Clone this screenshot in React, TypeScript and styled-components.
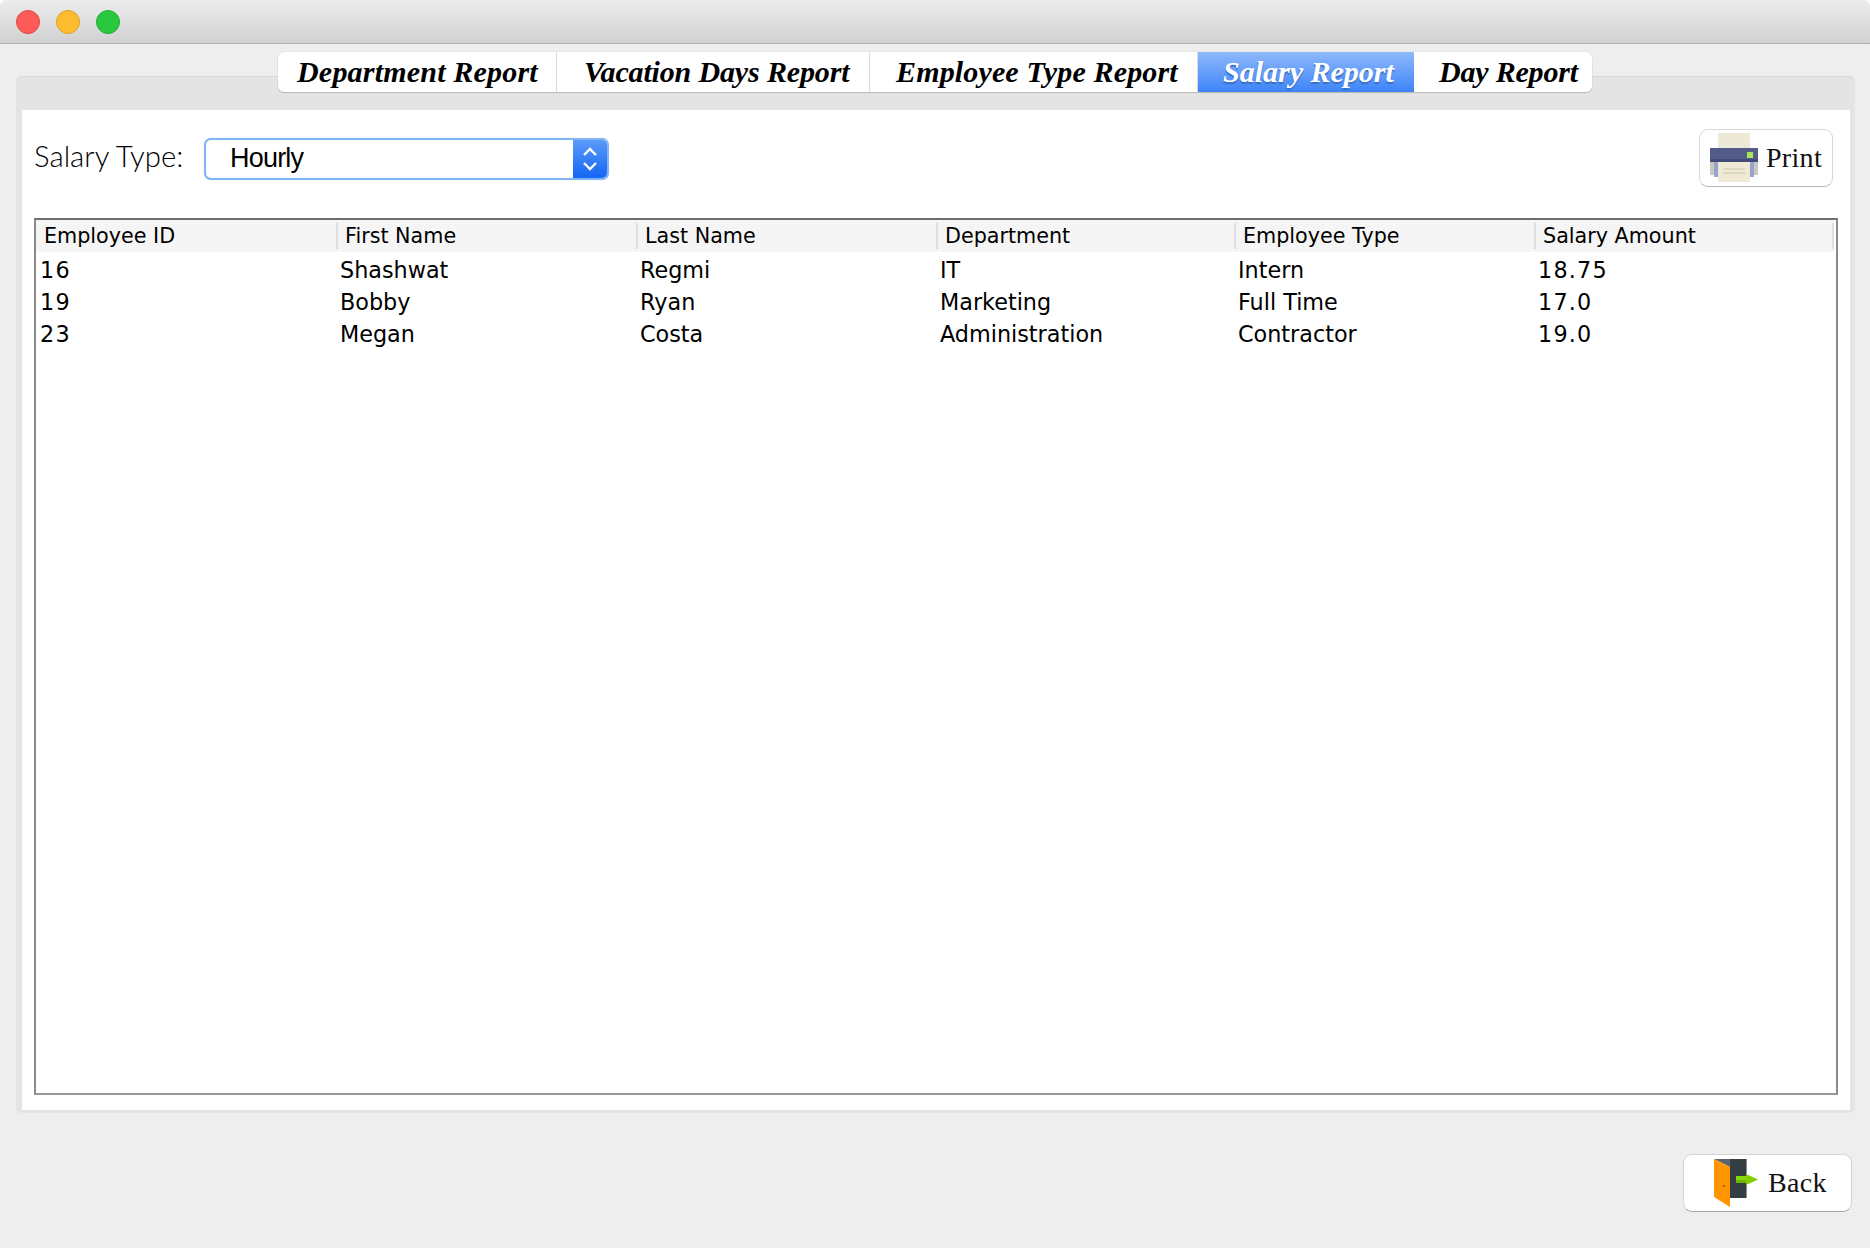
import React from "react";
import styled, { createGlobalStyle } from "styled-components";

const GlobalStyle = createGlobalStyle`
  html, body {
    margin: 0;
    padding: 0;
    background: #ffffff;
  }
`;

const columns = [
  "Employee ID",
  "First Name",
  "Last Name",
  "Department",
  "Employee Type",
  "Salary Amount",
];

const rows = [
  ["16", "Shashwat", "Regmi", "IT", "Intern", "18.75"],
  ["19", "Bobby", "Ryan", "Marketing", "Full Time", "17.0"],
  ["23", "Megan", "Costa", "Administration", "Contractor", "19.0"],
];

const tabs = [
  { label: "Department Report", width: 279, pad: 19, track: 0.2 },
  { label: "Vacation Days Report", width: 313, pad: 27, track: -0.15 },
  { label: "Employee Type Report", width: 328, pad: 26, track: 0.15 },
  { label: "Salary Report", width: 216, pad: 25, track: 0, active: true },
  { label: "Day Report", width: 178, pad: 25, track: -0.2 },
];

function PrinterIcon() {
  return (
    <svg width="50" height="50" viewBox="0 0 50 50">
      <rect x="9" y="0" width="32" height="15" fill="#ece9d8" />
      <rect x="1" y="29" width="48" height="13" fill="#c6c9c2" />
      <rect x="5" y="29" width="40" height="15" fill="#98a4c9" />
      <rect x="1" y="15" width="48" height="14" fill="#535c88" />
      <rect x="1" y="26" width="48" height="3" fill="#434c78" />
      <rect x="9" y="29" width="32" height="20" fill="#eeead6" />
      <rect x="14" y="35" width="22" height="2" fill="#dcd8c0" />
      <rect x="14" y="39" width="22" height="2" fill="#dcd8c0" />
      <rect x="38" y="19" width="6" height="6" fill="#a4e85a" />
    </svg>
  );
}

function DoorIcon() {
  return (
    <svg width="46" height="48" viewBox="0 0 46 48">
      <rect x="17" y="0" width="16" height="39" fill="#343c44" />
      <rect x="33" y="0" width="1" height="39" fill="#8a9096" />
      <polygon points="1,0 17,0 17,8" fill="#5b646c" />
      <polygon points="1,0 17,8 17,48 1,38" fill="#ff9500" />
      <circle cx="11" cy="27" r="1" fill="#8a5a10" />
      <rect x="23" y="17" width="11" height="4" fill="#8bd800" />
      <rect x="23" y="21" width="11" height="3" fill="#6fb500" />
      <polygon points="33,15 45,20.5 33,26" fill="#82cc00" />
    </svg>
  );
}

export default function App() {
  return (
    <Window>
      <GlobalStyle />
      <TitleBar>
        <Light color="#fc5b57" edge="#e2463f" />
        <Light color="#fdbc2e" edge="#e0a028" />
        <Light color="#28c83f" edge="#20ad32" />
      </TitleBar>
      <TabRow>
        <TabBar>
          {tabs.map((tab) => (
            <Tab
              key={tab.label}
              $active={tab.active}
              $width={tab.width}
              $pad={tab.pad}
              $track={tab.track}
            >
              {tab.label}
            </Tab>
          ))}
        </TabBar>
      </TabRow>
      <Panel>
        <Content>
          <Toolbar>
            <FilterGroup>
              <FilterLabel>Salary Type:</FilterLabel>
              <Combo>
                <ComboValue>Hourly</ComboValue>
                <ComboArrows>
                  <svg width="18" height="32" viewBox="0 0 18 32">
                    <path
                      d="M3 12 L9 6 L15 12 M3 20 L9 26 L15 20"
                      fill="none"
                      stroke="#fff"
                      strokeWidth="2.4"
                    />
                  </svg>
                </ComboArrows>
              </Combo>
            </FilterGroup>
            <PrintButton>
              <PrinterIcon />
              <ButtonText>Print</ButtonText>
            </PrintButton>
          </Toolbar>
          <Table>
            <HeaderRow>
              {columns.map((col) => (
                <HeaderCell key={col}>{col}</HeaderCell>
              ))}
            </HeaderRow>
            {rows.map((row) => (
              <DataRow key={row[0]}>
                {row.map((value, i) => (
                  <DataCell key={i} $numeric={i === 0 || i === 5}>
                    {value}
                  </DataCell>
                ))}
              </DataRow>
            ))}
          </Table>
        </Content>
      </Panel>
      <Footer>
        <BackButton>
          <DoorIcon />
          <ButtonText>Back</ButtonText>
        </BackButton>
      </Footer>
    </Window>
  );
}

const Window = styled.div`
  width: 1870px;
  height: 1248px;
  background: #eeeeee;
  border-radius: 7px 7px 0 0;
  overflow: hidden;
  display: flex;
  flex-direction: column;
`;

const TitleBar = styled.div`
  height: 44px;
  box-sizing: border-box;
  flex: none;
  padding-left: 16px;
  display: flex;
  align-items: center;
  gap: 16px;
  background: linear-gradient(#ececec, #d1d1d1);
  border-bottom: 1px solid #b0b0b0;
`;

const Light = styled.div<{ color: string; edge: string }>`
  width: 24px;
  height: 24px;
  box-sizing: border-box;
  border-radius: 50%;
  background: ${(p) => p.color};
  border: 1px solid ${(p) => p.edge};
`;

const TabRow = styled.div`
  display: flex;
  justify-content: center;
  margin-top: 8px;
  margin-bottom: -16px;
  position: relative;
  z-index: 1;
`;

const TabBar = styled.div`
  display: flex;
  height: 40px;
  border-radius: 6px;
  overflow: hidden;
  box-shadow: 0 1px 1px #b8b8b8, 0 0 1px #a8a8a8;
`;

const Tab = styled.div<{
  $active?: boolean;
  $width: number;
  $pad: number;
  $track: number;
}>`
  width: ${(p) => p.$width}px;
  box-sizing: border-box;
  display: flex;
  align-items: center;
  padding-left: ${(p) => p.$pad}px;
  white-space: nowrap;
  font-family: "Liberation Serif", serif;
  font-weight: bold;
  font-style: italic;
  font-size: 30px;
  letter-spacing: ${(p) => p.$track}px;
  color: ${(p) => (p.$active ? "#ffffff" : "#000000")};
  background: ${(p) =>
    p.$active ? "linear-gradient(#8fb9fb, #3c84f8)" : "#ffffff"};
  text-shadow: ${(p) => (p.$active ? "0 2px 1px #3a6fc0" : "none")};
  border-right: ${(p) => (p.$active ? "none" : "1px solid #dcdcdc")};

  &:last-child {
    border-right: none;
  }
`;

const Panel = styled.div`
  margin: 0 15px 0 16px;
  height: 1037px;
  box-sizing: border-box;
  padding: 33px 5px 3px 6px;
  background: #e4e4e4;
  border-radius: 6px;
  border-top: 1px solid #d8d8d8;
  display: flex;
  flex: none;
`;

const Content = styled.div`
  flex: 1;
  background: #ffffff;
  padding: 19px 12px 15px 12px;
  display: flex;
  flex-direction: column;
`;

const Toolbar = styled.div`
  display: flex;
  align-items: center;
  justify-content: space-between;
  height: 58px;
  margin-bottom: 31px;
  padding-right: 5px;
`;

const FilterGroup = styled.div`
  display: flex;
  align-items: center;
  gap: 21px;
`;

const FilterLabel = styled.div`
  font-family: "Lato", sans-serif;
  font-weight: 300;
  font-size: 29.3px;
  line-height: 36px;
  margin-top: -4px;
  color: #000;
  width: 149px;
  white-space: nowrap;
`;

const Combo = styled.div`
  width: 405px;
  height: 42px;
  margin-top: 1px;
  box-sizing: border-box;
  border: 2px solid #7fb4f5;
  border-radius: 7px;
  box-shadow: 0 0 1px #a9cdf8;
  display: flex;
  align-items: center;
  justify-content: space-between;
  overflow: hidden;
  background: #fff;
`;

const ComboValue = styled.div`
  padding-left: 24px;
  font-family: "Liberation Sans", sans-serif;
  font-size: 27px;
  letter-spacing: -0.8px;
  color: #000;
`;

const ComboArrows = styled.div`
  width: 34px;
  height: 100%;
  display: flex;
  align-items: center;
  justify-content: center;
  background: linear-gradient(#5a9bf8, #1565f5);
`;

const PrintButton = styled.div`
  width: 134px;
  height: 58px;
  box-sizing: border-box;
  border-radius: 9px;
  background: #fff;
  border: 1px solid #d8d8d8;
  border-bottom-color: #b5b5b5;
  display: flex;
  align-items: center;
  gap: 7px;
  padding-left: 9px;
`;

const ButtonText = styled.span`
  font-family: "Liberation Serif", serif;
  font-size: 28px;
  letter-spacing: 0.3px;
  color: #111;
`;

const Table = styled.div`
  flex: 1;
  box-sizing: border-box;
  border: 2px solid #8a8a8a;
  border-top-color: #6e6e6e;
  border-bottom-color: #999999;
  font-family: "DejaVu Sans", sans-serif;
  color: #000;
`;

const HeaderRow = styled.div`
  display: grid;
  grid-template-columns: 302px 300px 300px 298px 300px 298px;
  width: 1798px;
  height: 32px;
  align-items: center;
  background: #f5f5f5;
`;

const HeaderCell = styled.div`
  box-sizing: border-box;
  height: 26px;
  line-height: 26px;
  padding-left: 7px;
  font-size: 20.7px;
  border-right: 2px solid #dedede;
  white-space: nowrap;

  &:first-child {
    padding-left: 8px;
  }
`;

const DataRow = styled.div`
  display: grid;
  grid-template-columns: 302px 300px 300px 298px 300px 298px;
  height: 32px;
  align-items: center;

  &:nth-child(2) {
    margin-top: 2px;
  }
`;

const DataCell = styled.div<{ $numeric?: boolean }>`
  padding-left: 2px;
  font-size: 22.3px;
  letter-spacing: ${(p) => (p.$numeric ? "1.2px" : "0")};
  white-space: nowrap;

  &:first-child {
    padding-left: 4px;
  }
`;

const Footer = styled.div`
  display: flex;
  justify-content: flex-end;
  padding: 41px 18px 0 0;
`;

const BackButton = styled.div`
  width: 169px;
  height: 58px;
  box-sizing: border-box;
  border-radius: 9px;
  background: #fff;
  border: 1px solid #d4d4d4;
  border-bottom-color: #a8a8a8;
  display: flex;
  align-items: center;
  gap: 9px;
  padding-left: 29px;
`;
